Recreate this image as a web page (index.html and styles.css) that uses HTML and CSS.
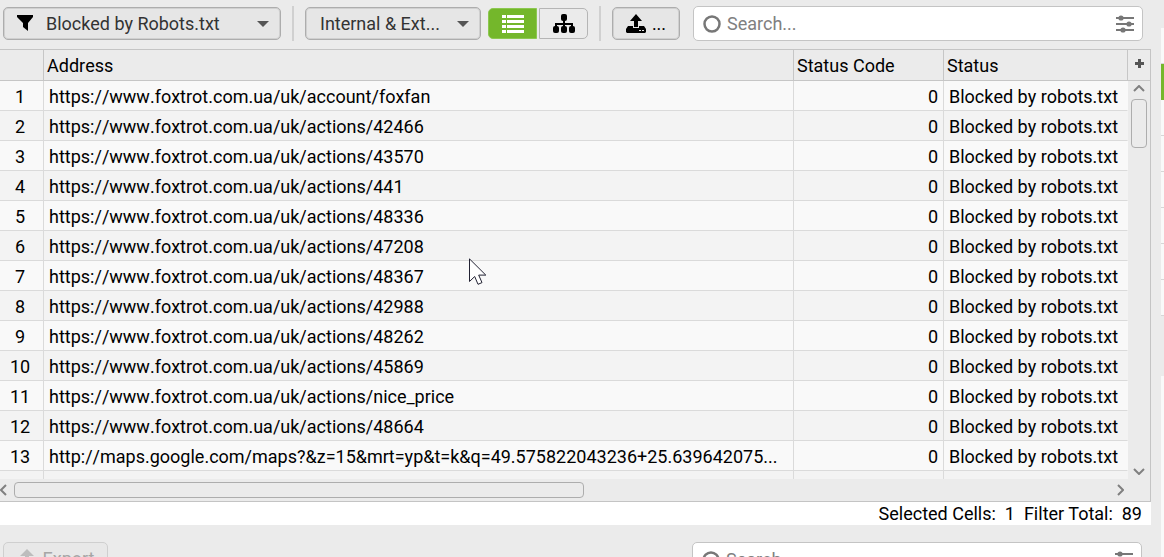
FILE: index.html
```html
<!DOCTYPE html>
<html lang="en">
<head>
    <meta charset="UTF-8">
    <meta name="viewport" content="width=device-width, initial-scale=1.0">
    <title>Blocked by Robots.txt</title>
    <link rel="stylesheet" href="styles.css">
</head>
<body>
    <main class="main">
        <!-- Filters, view mode, export and search -->
        <div class="toolbar">
            <div class="dropdown dropdown-filter">
                <svg class="filter-icon" width="18" height="17" viewBox="0 0 18 17"><path d="M1 0h16v2l-5 6v8l-5-4V8L1 2z"/></svg>
                <select aria-label="Filter">
                    <option>Blocked by Robots.txt</option>
                </select>
                <svg class="arrow" width="12" height="6" viewBox="0 0 12 6"><path d="M0 0h12L6 6z"/></svg>
            </div>
            <span class="separator"></span>
            <div class="dropdown dropdown-scope">
                <select aria-label="Scope">
                    <option>Internal &amp; Ext...</option>
                </select>
                <svg class="arrow" width="12" height="6" viewBox="0 0 12 6"><path d="M0 0h12L6 6z"/></svg>
            </div>
            <div class="view-mode">
                <button class="view-button active" aria-label="List view">
                    <svg width="22" height="18" viewBox="0 0 22 18"><path d="M0 0h4v3H0zM5 0h17v3H5zM0 5h4v3H0zM5 5h17v3H5zM0 10h4v3H0zM5 10h17v3H5zM0 15h4v3H0zM5 15h17v3H5z"/></svg>
                </button>
                <button class="view-button" aria-label="Tree view">
                    <svg width="22" height="20" viewBox="0 0 22 20"><rect x="8" y="0" width="6" height="7" rx="2"/><path d="M10 6h2v3h8v4h-2v-2h-6v2h-2v-2H4v2H2V9h8z"/><rect x="0" y="12" width="6" height="7" rx="2"/><rect x="8" y="12" width="6" height="7" rx="2"/><rect x="16" y="12" width="6" height="7" rx="2"/></svg>
                </button>
            </div>
            <span class="separator"></span>
            <button class="export-button" aria-label="Export">
                <svg width="20" height="20" viewBox="0 0 20 20"><path d="M10 0l6 7h-4v6H8V7H4z"/><path fill-rule="evenodd" d="M2 12h5v2h6v-2h5l2 3v3l-1 1H1l-1-1v-3zM13 16v1h2v-1zM16 16v1h2v-1z"/></svg>
                <span>...</span>
            </button>
            <div class="search">
                <svg width="18" height="18" viewBox="0 0 18 18"><circle cx="9" cy="9" r="7.5" fill="none" stroke="#777" stroke-width="2.5"/></svg>
                <input type="text" placeholder="Search..." aria-label="Search">
                <svg width="18" height="18" viewBox="0 0 18 18" fill="#777"><path d="M0 2h18v2H0zM0 8h18v2H0zM0 14h18v2H0z"/><circle cx="5" cy="3" r="2.6"/><circle cx="13" cy="9" r="2.6"/><circle cx="7" cy="15" r="2.6"/></svg>
            </div>
        </div>

        <!-- Results -->
        <div class="grid">
            <div class="grid-body">
                <div class="grid-view">
                    <table>
                        <colgroup>
                            <col class="col-number">
                            <col>
                            <col class="col-code">
                            <col class="col-status">
                        </colgroup>
                        <thead>
                            <tr><th></th><th>Address</th><th>Status Code</th><th>Status</th></tr>
                        </thead>
                        <tbody>
                            <tr><td>1</td><td>https://www.foxtrot.com.ua/uk/account/foxfan</td><td>0</td><td>Blocked by robots.txt</td></tr>
                            <tr><td>2</td><td>https://www.foxtrot.com.ua/uk/actions/42466</td><td>0</td><td>Blocked by robots.txt</td></tr>
                            <tr><td>3</td><td>https://www.foxtrot.com.ua/uk/actions/43570</td><td>0</td><td>Blocked by robots.txt</td></tr>
                            <tr><td>4</td><td>https://www.foxtrot.com.ua/uk/actions/441</td><td>0</td><td>Blocked by robots.txt</td></tr>
                            <tr><td>5</td><td>https://www.foxtrot.com.ua/uk/actions/48336</td><td>0</td><td>Blocked by robots.txt</td></tr>
                            <tr><td>6</td><td>https://www.foxtrot.com.ua/uk/actions/47208</td><td>0</td><td>Blocked by robots.txt</td></tr>
                            <tr><td>7</td><td>https://www.foxtrot.com.ua/uk/actions/48367</td><td>0</td><td>Blocked by robots.txt</td></tr>
                            <tr><td>8</td><td>https://www.foxtrot.com.ua/uk/actions/42988</td><td>0</td><td>Blocked by robots.txt</td></tr>
                            <tr><td>9</td><td>https://www.foxtrot.com.ua/uk/actions/48262</td><td>0</td><td>Blocked by robots.txt</td></tr>
                            <tr><td>10</td><td>https://www.foxtrot.com.ua/uk/actions/45869</td><td>0</td><td>Blocked by robots.txt</td></tr>
                            <tr><td>11</td><td>https://www.foxtrot.com.ua/uk/actions/nice_price</td><td>0</td><td>Blocked by robots.txt</td></tr>
                            <tr><td>12</td><td>https://www.foxtrot.com.ua/uk/actions/48664</td><td>0</td><td>Blocked by robots.txt</td></tr>
                            <tr><td>13</td><td>http://maps.google.com/maps?&amp;z=15&amp;mrt=yp&amp;t=k&amp;q=49.575822043236+25.639642075...</td><td>0</td><td>Blocked by robots.txt</td></tr>
                            <tr><td></td><td></td><td></td><td></td></tr>
                        </tbody>
                    </table>
                </div>
                <div class="scroll-y">
                    <button class="add-column" aria-label="Add column">
                        <svg width="9" height="9" viewBox="0 0 9 9"><path d="M3 0h3v3h3v3H6v3H3V6H0V3h3z"/></svg>
                    </button>
                    <svg class="chevron" width="12" height="7" viewBox="0 0 12 7"><path d="M1 6l5-5 5 5"/></svg>
                    <div class="thumb-y"></div>
                    <svg class="chevron chevron-end" width="12" height="7" viewBox="0 0 12 7"><path d="M1 1l5 5 5-5"/></svg>
                </div>
            </div>
            <div class="scroll-x">
                <svg class="chevron" width="7" height="12" viewBox="0 0 7 12"><path d="M6 1L1 6l5 5"/></svg>
                <div class="track-x"><div class="thumb-x"></div></div>
                <svg class="chevron" width="7" height="12" viewBox="0 0 7 12"><path d="M1 1l5 5-5 5"/></svg>
            </div>
        </div>
        <div class="status-bar">
            <span>Selected Cells:&nbsp; 1</span>
            <span>Filter Total:&nbsp; 89</span>
        </div>

        <!-- Top of the details panel -->
        <div class="details">
            <button class="details-export" disabled>
                <svg width="20" height="20" viewBox="0 0 20 20"><path d="M10 0l7 7h-5v6H8V7H3z"/><path d="M0 12h7v2h6v-2h7v7H0z"/></svg>
                <span>Export</span>
            </button>
            <div class="search">
                <svg width="18" height="18" viewBox="0 0 18 18"><circle cx="9" cy="9" r="7.5" fill="none" stroke="#777" stroke-width="2.5"/></svg>
                <input type="text" placeholder="Search..." aria-label="Search details">
                <svg width="18" height="18" viewBox="0 0 18 18" fill="#777"><path d="M0 2h18v2H0zM0 8h18v2H0zM0 14h18v2H0z"/><circle cx="5" cy="3" r="2.6"/><circle cx="13" cy="9" r="2.6"/><circle cx="7" cy="15" r="2.6"/></svg>
            </div>
        </div>
    </main>

    <!-- Edge of the right panel -->
    <aside class="side">
        <div class="side-item"></div>
        <div class="side-item selected"></div>
        <div class="side-item"></div>
        <div class="side-item"></div>
        <div class="side-item"></div>
        <div class="side-item"></div>
        <div class="side-item"></div>
        <div class="side-item"></div>
        <div class="side-content"></div>
    </aside>

    <svg class="cursor" width="18" height="28" viewBox="0 0 18 28"><path d="M.5.9v22.6l5.2-5 3.3 7.8 4-1.7-3.3-7.5h7.1z" fill="#fff" stroke="#223" stroke-width="1"/></svg>
</body>
</html>
```
FILE: styles.css
```css
/* Basic Reset */
* {
    margin: 0;
    padding: 0;
    box-sizing: border-box;
}

body {
    display: flex;
    gap: 10px;
    height: 100vh;
    overflow: hidden;
    background-color: #ebebeb;
    font-family: Roboto, sans-serif;
    font-size: 18px;
    line-height: 22px;
    color: #000;
}

button,
select,
input {
    font: inherit;
    color: inherit;
}

svg {
    display: block;
    flex-shrink: 0;
}

.main {
    display: flex;
    flex-direction: column;
    flex: 1;
    min-width: 0;
}

/* Toolbar */
.toolbar {
    display: flex;
    align-items: center;
    flex-shrink: 0;
    height: 49px;
    padding: 0 8px 2px 3px;
}

.dropdown {
    display: flex;
    align-items: center;
    position: relative;
    height: 33px;
    border: 1px solid #adadad;
    border-radius: 5px;
    box-shadow: inset 0 0 0 1px #d0d0d0;
    background-color: #e6e6e6;
    color: #333;
}

.dropdown select {
    width: 100%;
    height: 100%;
    padding: 0 32px 0 14px;
    border: none;
    background: transparent;
    appearance: none;
    outline: none;
}

.dropdown-filter {
    width: 278px;
}

.dropdown-filter select {
    padding-left: 42px;
}

.dropdown-scope {
    width: 176px;
}

.filter-icon {
    position: absolute;
    left: 12px;
    fill: #000;
}

.arrow {
    position: absolute;
    right: 11px;
    fill: #555;
    pointer-events: none;
}

.separator {
    width: 2px;
    height: 35px;
    margin: 0 11px;
    background-color: #d0d0d0;
}

.view-mode {
    display: flex;
    gap: 2px;
    margin-left: 7px;
}

.view-button {
    display: flex;
    align-items: center;
    justify-content: center;
    width: 49px;
    height: 31px;
    border: 1px solid #b5b5b5;
    border-radius: 0 5px 5px 0;
    background-color: #ebebeb;
}

.view-button.active {
    border-color: #8cc850;
    border-radius: 5px 0 0 5px;
    background-color: #74b72b;
    fill: #fff;
}

.export-button {
    display: flex;
    align-items: center;
    justify-content: center;
    gap: 6px;
    width: 68px;
    height: 33px;
    border: 1px solid #adadad;
    border-radius: 5px;
    box-shadow: inset 0 0 0 1px #d0d0d0;
    background-color: #e6e6e6;
}

.search {
    display: flex;
    align-items: center;
    flex: 1;
    gap: 6px;
    height: 35px;
    margin-left: 13px;
    padding: 0 8px 0 9px;
    border: 1px solid #c4c4c4;
    border-radius: 5px;
    background-color: #fff;
}

.search input {
    flex: 1;
    min-width: 0;
    border: none;
    outline: none;
    background: transparent;
}

.search input::placeholder {
    color: #808080;
}

/* Results grid */
.grid {
    display: flex;
    flex-direction: column;
    flex: 1;
    min-height: 0;
    border: 1px solid #c4c4c4;
    border-left: none;
}

.grid-body {
    display: flex;
    flex: 1;
    min-height: 0;
}

.grid-view {
    flex: 1;
    overflow: hidden;
}

table {
    width: 100%;
    table-layout: fixed;
    border-collapse: separate;
    border-spacing: 0;
    font-kerning: none;
}

.col-number {
    width: 44px;
}

.col-code {
    width: 150px;
}

.col-status {
    width: 184px;
}

th,
td {
    height: 30px;
    padding: 2px 5px 0;
    overflow: hidden;
    border-right: 1px solid #dadada;
    border-bottom: 1px solid #dadada;
    text-align: left;
    font-weight: 400;
    white-space: nowrap;
}

th {
    height: 31px;
    padding: 2px 3px 0;
    border-color: #c6c6c6;
}

td:first-child {
    padding: 2px 3px 0 0;
    text-align: center;
}

td:nth-child(3) {
    text-align: right;
}

td:last-child {
    border-right-color: transparent;
}

tbody tr {
    background-color: #f9f9f9;
}

tbody tr:nth-child(even) {
    background-color: #f3f3f3;
}

/* Scrollbars */
.scroll-y {
    display: flex;
    flex-direction: column;
    align-items: center;
    width: 22px;
}

.add-column {
    display: flex;
    justify-content: center;
    width: 100%;
    height: 31px;
    margin-bottom: 4px;
    padding-top: 9px;
    border: none;
    border-bottom: 1px solid #c6c6c6;
    background: transparent;
    fill: #555;
}

.chevron {
    fill: none;
    stroke: #808080;
    stroke-width: 2;
}

.chevron-end {
    margin: auto 0 4px;
}

.thumb-y {
    width: 16px;
    height: 49px;
    margin-top: 7px;
    border: 1px solid #adadad;
    border-radius: 4px;
}

.scroll-x {
    display: flex;
    align-items: center;
    height: 22px;
    padding-right: 26px;
}

.track-x {
    flex: 1;
    padding: 0 7px;
}

.thumb-x {
    width: 52%;
    height: 16px;
    border: 1px solid #adadad;
    border-radius: 4px;
}

.status-bar {
    display: flex;
    justify-content: flex-end;
    gap: 9px;
    flex-shrink: 0;
    height: 23px;
    padding: 1px 9px 0 0;
    background-color: #fff;
}

/* Details panel */
.details {
    display: flex;
    align-items: flex-start;
    justify-content: space-between;
    flex-shrink: 0;
    height: 32px;
    padding: 17px 9px 0 3px;
    overflow: hidden;
}

.details-export {
    display: flex;
    align-items: center;
    justify-content: center;
    gap: 6px;
    width: 105px;
    height: 33px;
    border: 1px solid #cfcfcf;
    border-radius: 5px;
    background-color: #e8e8e8;
    color: #a6a6a6;
    fill: #bdbdbd;
}

.details .search {
    flex: none;
    width: 450px;
}

/* Right panel */
.side {
    display: flex;
    flex-direction: column;
    width: 3px;
    padding-top: 28px;
}

.side-item {
    flex-shrink: 0;
    height: 36px;
    border-bottom: 1px solid #d6d6d6;
    background-color: #f9f9f9;
}

.side-item.selected {
    border-color: #74b72b;
    background-color: #74b72b;
}

.side-content {
    flex: 1;
    margin-top: 60px;
    background-color: #f9f9f9;
}

/* Mouse pointer over the grid */
.cursor {
    position: absolute;
    left: 469px;
    top: 258px;
}
```
